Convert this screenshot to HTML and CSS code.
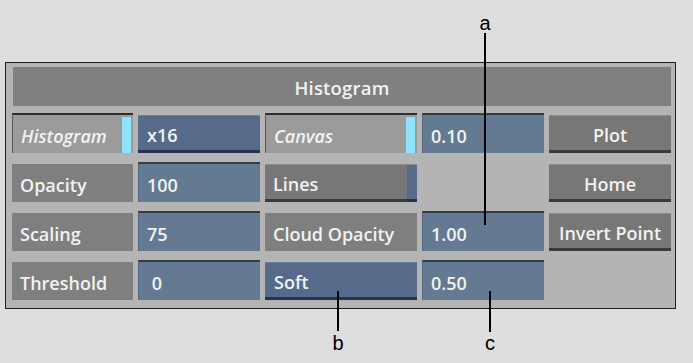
FILE: index.html
```html
<!DOCTYPE html>
<html>
<head>
<meta charset="utf-8">
<link rel="stylesheet" href="styles.css">
</head>
<body>
<div class="page">
  <div class="panel">
    <div class="header">Histogram</div>
    <div class="grid">
      <div class="cell toggle"><span class="t">Histogram</span><span class="cyan"></span></div>
      <div class="cell btn blue">x16</div>
      <div class="cell toggle"><span class="t">Canvas</span><span class="cyan"></span></div>
      <div class="cell field">0.10</div>
      <div class="cell btn gray center">Plot</div>

      <div class="cell label">Opacity</div>
      <div class="cell field">100</div>
      <div class="cell btn gray striped"><span class="t">Lines</span><span class="bstripe"></span></div>
      <div class="cell empty"></div>
      <div class="cell btn gray center">Home</div>

      <div class="cell label">Scaling</div>
      <div class="cell field">75</div>
      <div class="cell label">Cloud Opacity</div>
      <div class="cell field">1.00</div>
      <div class="cell btn gray center">Invert Point</div>

      <div class="cell label">Threshold</div>
      <div class="cell field">&nbsp;0</div>
      <div class="cell btn blue">Soft</div>
      <div class="cell field">0.50</div>
      <div class="cell empty"></div>
    </div>
  </div>
  <div class="callout ca"><span class="letter">a</span><span class="stem"></span></div>
  <div class="callout cb"><span class="stem"></span><span class="letter">b</span></div>
  <div class="callout cc"><span class="stem"></span><span class="letter">c</span></div>
</div>
</body>
</html>
```
FILE: styles.css
```css
html, body {
  margin: 0;
  padding: 0;
  background: #dedede;
}
.page {
  position: relative;
  width: 693px;
  height: 363px;
  padding: 62px 0 0 5px;
  box-sizing: border-box;
}
.panel {
  width: 671px;
  height: 247px;
  box-sizing: border-box;
  border: 1px solid #1e1e1e;
  background: #b4b4b4;
  padding: 4px 4px 0 6px;
  font-family: "Open Sans", "DejaVu Sans", sans-serif;
  font-weight: 600;
  font-size: 18px;
  color: #f2f2f2;
}
.header {
  height: 39px;
  margin-left: 1px;
  padding-top: 2px;
  box-sizing: border-box;
  background: #808080;
  display: flex;
  align-items: center;
  justify-content: center;
  font-size: 18.5px;
  letter-spacing: 0.2px;
}
.grid {
  margin-top: 7px;
  display: grid;
  grid-template-columns: 121px 122px 152px 122px 122px;
  grid-template-rows: repeat(4, 40px);
  column-gap: 5px;
  row-gap: 9px;
}
.cell {
  box-sizing: border-box;
  display: flex;
  align-items: center;
  padding-left: 8px;
  padding-top: 3px;
  white-space: nowrap;
  line-height: 1;
}
.label {
  background: #7f7f7f;
  margin-top: 2px;
}
.field {
  background: #637a92;
  border-top: 2px solid #353b44;
  border-left: 1px solid #55677a;
  padding-left: 8px;
}
.btn {
  margin-top: 2px;
  border-top: 1px solid #8c8c8c;
  border-bottom: 3px solid #3a3a3a;
}
.btn.gray {
  background: #777777;
}
.btn.blue {
  background: #566b8a;
  border-top-color: #6a80a0;
  border-bottom-color: #27334d;
  padding-left: 9px;
}
.center {
  justify-content: center;
  padding-left: 0;
}
.toggle {
  background: #9b9b9b;
  border-top: 2px solid #2e2e2e;
  border-left: 1px solid #5a5a5a;
  padding-right: 2px;
  padding-top: 0;
  font-style: italic;
  justify-content: space-between;
}
.toggle .t {
  padding-top: 3px;
}
.cyan {
  width: 9px;
  align-self: stretch;
  margin: 2px 0 0;
  background: #8fe3fb;
}
.striped {
  justify-content: space-between;
  padding-right: 0;
  padding-top: 0;
}
.striped .t {
  padding-top: 3px;
}
.bstripe {
  width: 10px;
  align-self: stretch;
  background: #566b8a;
  margin-bottom: -3px;
  border-bottom: 3px solid #27334d;
}
.empty {
  background: transparent;
}
.callout {
  position: absolute;
  display: flex;
  flex-direction: column;
  align-items: center;
  width: 20px;
  font-family: "Liberation Sans", Arial, sans-serif;
  font-size: 20px;
  color: #000;
}
.letter {
  line-height: 20px;
  height: 20px;
}
.stem {
  width: 2px;
  background: #000;
}
.ca {
  left: 475px;
  top: 13px;
}
.ca .stem {
  height: 192px;
}
.cb {
  left: 328px;
  top: 291px;
}
.cb .stem {
  height: 40px;
  margin-bottom: 2px;
}
.cc {
  left: 480px;
  top: 291px;
}
.cc .stem {
  height: 41px;
  margin-bottom: 1px;
}
```
